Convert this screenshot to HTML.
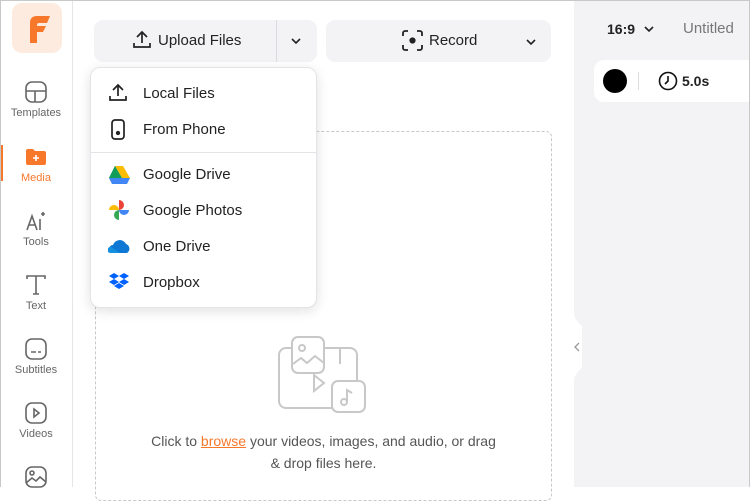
<!DOCTYPE html>
<html><head><style>
*{margin:0;padding:0;box-sizing:border-box}
body{width:750px;height:487px;overflow:hidden;font-family:"Liberation Sans",sans-serif;background:#fff;position:relative}
.frame{position:absolute;inset:0;border:1px solid #c8c8c8;border-bottom:none;pointer-events:none;z-index:20}
.side{position:absolute;left:0;top:0;width:73px;height:487px;border-right:1px solid #e6e6ea;background:#fff}
.logo{position:absolute;left:12px;top:3px;width:50px;height:50px;border-radius:10px;background:#fdebe0}
.it{position:absolute;left:0;width:72px;text-align:center;font-size:11px;color:#666}
.it svg{display:block;margin:0 auto 3px}
.main{position:absolute;left:73px;top:0;width:501px;height:487px;background:#fff}
.btn{position:absolute;top:20px;height:42px;background:#f3f3f6;border-radius:9px;font-size:15px;color:#222}
.right{position:absolute;left:574px;top:0;width:176px;height:487px;background:#f3f3f6}
.dash{position:absolute;left:95px;top:131px;width:457px;height:370px;border:1px dashed #c8c8c8;border-radius:6px}
.menu{position:absolute;left:90px;top:67px;width:227px;height:241px;background:#fff;border:1px solid #e4e4e8;border-radius:10px;box-shadow:0 3px 12px rgba(0,0,0,.12);z-index:5}
.mi{position:absolute;left:52px;font-size:15px;color:#222}
.mic{position:absolute;left:17px}
</style></head><body>
<div class="side">
 <div class="logo"><svg width="50" height="50" viewBox="0 0 50 50"><path d="M18 20q0-7 7-7h13l-3 7H27q-2 0-2 2v1h9l-3 6h-6v11h-7z" fill="#f7782b"/></svg></div>
 <div class="it" style="top:80px"><svg width="24" height="24" viewBox="0 0 24 24" fill="none" stroke="#666" stroke-width="1.6"><rect x="2" y="2" width="20" height="20" rx="6"/><path d="M2 11h20M11 11v11"/></svg>Templates</div>
 <div style="position:absolute;left:0;top:145px;width:3px;height:36px;background:#f7782b"></div>
 <div class="it" style="top:145px;color:#f7782b"><svg width="24" height="24" viewBox="0 0 24 24"><path d="M2 6a2 2 0 0 1 2-2h5l2 2h9a2 2 0 0 1 2 2v10a2 2 0 0 1-2 2H4a2 2 0 0 1-2-2z" fill="#f7782b"/><path d="M12 10v6M9 13h6" stroke="#fff" stroke-width="1.6"/></svg>Media</div>
 <div class="it" style="top:209px"><svg width="24" height="24" viewBox="0 0 24 24" fill="none" stroke="#666" stroke-width="1.6"><path d="M3 21l5-14 5 14M5 16h6M16 10v11M19 3v4M17 5h4"/></svg>Tools</div>
 <div class="it" style="top:273px"><svg width="24" height="24" viewBox="0 0 24 24" fill="none" stroke="#666" stroke-width="1.6"><path d="M3 6V3h18v3M12 3v18M9 21h6"/></svg>Text</div>
 <div class="it" style="top:337px"><svg width="24" height="24" viewBox="0 0 24 24" fill="none" stroke="#666" stroke-width="1.6"><rect x="2" y="2" width="20" height="20" rx="6"/><path d="M7 15h5M14 15h3"/></svg>Subtitles</div>
 <div class="it" style="top:401px"><svg width="24" height="24" viewBox="0 0 24 24" fill="none" stroke="#666" stroke-width="1.6"><rect x="2" y="2" width="20" height="20" rx="6"/><path d="M10 8l5 4-5 4z"/></svg>Videos</div>
 <div class="it" style="top:465px"><svg width="24" height="24" viewBox="0 0 24 24" fill="none" stroke="#666" stroke-width="1.6"><rect x="2" y="2" width="20" height="20" rx="6"/><circle cx="8" cy="8" r="2"/><path d="M2 18l6-5 4 3 4-4 6 5"/></svg></div>
</div>
<div class="main"></div>
<div class="btn" style="left:94px;width:223px">
 <svg style="position:absolute;left:38px;top:10px" width="20" height="20" viewBox="0 0 20 20" fill="none" stroke="#222" stroke-width="1.7"><path d="M10 13V2M5 7l5-5 5 5M2 13v4h16v-4"/></svg>
 <span style="position:absolute;left:64px;top:12px">Upload Files</span>
 <div style="position:absolute;left:182px;top:0;width:1px;height:42px;background:#dcdce0"></div>
 <svg style="position:absolute;left:197px;top:17px" width="10" height="8" viewBox="0 0 10 8" fill="none" stroke="#222" stroke-width="1.6"><path d="M1 2l4 4 4-4"/></svg>
</div>
<div class="btn" style="left:326px;width:225px">
 <svg style="position:absolute;left:76px;top:10px" width="21" height="21" viewBox="0 0 21 21" fill="none" stroke="#222" stroke-width="1.8"><path d="M1 6V3a2 2 0 0 1 2-2h3M15 1h3a2 2 0 0 1 2 2v3M20 15v3a2 2 0 0 1-2 2h-3M6 20H3a2 2 0 0 1-2-2v-3"/><circle cx="10.5" cy="10.5" r="2.2" fill="#222"/></svg>
 <span style="position:absolute;left:103px;top:12px">Record</span>
 <svg style="position:absolute;left:200px;top:18px" width="10" height="8" viewBox="0 0 10 8" fill="none" stroke="#222" stroke-width="1.6"><path d="M1 2l4 4 4-4"/></svg>
</div>
<div class="dash"></div>
<svg style="position:absolute;left:276px;top:334px" width="92" height="80" viewBox="0 0 92 80" fill="none" stroke="#c8c8c8" stroke-width="2"><rect x="3" y="14" width="78" height="60" rx="7"/><rect x="16" y="3" width="32" height="36" rx="6" fill="#fff"/><circle cx="26" cy="14" r="3"/><path d="M17 30l8-6 6 5 8-7 9 7M48 14v18M64 14v16"/><path d="M38 41l10 8-10 8z"/><rect x="56" y="47" width="33" height="31" rx="6" fill="#fff"/><circle cx="68" cy="68" r="3"/><path d="M71 68v-12l5 3"/></svg>
<div style="position:absolute;left:95px;top:430px;width:457px;text-align:center;font-size:14px;line-height:22px;color:#555">Click to <span style="color:#f7782b;text-decoration:underline">browse</span> your videos, images, and audio, or drag<br>&amp; drop files here.</div>
<div class="menu">
 <svg class="mic" style="top:15px" width="20" height="20" viewBox="0 0 20 20" fill="none" stroke="#222" stroke-width="1.7"><path d="M10 13V2M5 7l5-5 5 5M2 13v4h16v-4"/></svg>
 <div class="mi" style="top:17px">Local Files</div>
 <svg class="mic" style="top:51px;left:20px" width="14" height="21" viewBox="0 0 14 21" fill="none" stroke="#222" stroke-width="1.7"><rect x="1" y="1" width="12" height="19" rx="3"/><circle cx="7" cy="14" r="1.3" fill="#222"/></svg>
 <div class="mi" style="top:53px">From Phone</div>
 <div style="position:absolute;left:0;top:84px;width:225px;height:1px;background:#e4e4e8"></div>
 <svg class="mic" style="top:97px" width="22" height="20" viewBox="0 0 22 20"><path d="M7 1h8l7 12h-8z" fill="#fbbc04"/><path d="M7 1l7 12-4 6L1 13z" fill="#0f9d58"/><path d="M1 13l3 6h15l3-6z" fill="#4285f4"/><path d="M7 1l3 6-5 6H1z" fill="#0f9d58"/></svg>
 <div class="mi" style="top:98px">Google Drive</div>
 <svg class="mic" style="top:131px" width="22" height="22" viewBox="0 0 22 22"><path d="M11 11V1a5 5 0 0 1 0 10z" fill="#ea4335"/><path d="M11 11h10a5 5 0 0 1-10 0z" fill="#4285f4"/><path d="M11 11v10a5 5 0 0 1 0-10z" fill="#34a853"/><path d="M11 11H1a5 5 0 0 1 10 0z" fill="#fbbc04"/></svg>
 <div class="mi" style="top:134px">Google Photos</div>
 <svg class="mic" style="top:170px" width="24" height="16" viewBox="0 0 24 16"><path d="M5 15a4 4 0 0 1 0-8 7 7 0 0 1 13-1 5 5 0 0 1 1 9z" fill="#0f78d4"/><path d="M2 15a3 3 0 0 1 1-6l9 6z" fill="#1490df"/></svg>
 <div class="mi" style="top:170px">One Drive</div>
 <svg class="mic" style="top:204px" width="22" height="20" viewBox="0 0 22 20" fill="#0061fe"><path d="M6 1l5 3-5 3-5-3zM16 1l5 3-5 3-5-3zM1 10l5-3 5 3-5 3zM11 10l5-3 5 3-5 3zM6 14l5-3 5 3-5 3z"/></svg>
 <div class="mi" style="top:206px">Dropbox</div>
</div>
<div class="right">
 <div style="position:absolute;left:33px;top:21px;font-size:14px;font-weight:bold;color:#222">16:9</div>
 <svg style="position:absolute;left:70px;top:25px" width="10" height="8" viewBox="0 0 10 8" fill="none" stroke="#222" stroke-width="1.6"><path d="M1 2l4 4 4-4"/></svg>
 <div style="position:absolute;left:109px;top:20px;font-size:15px;color:#777">Untitled</div>
 <div style="position:absolute;left:20px;top:60px;width:170px;height:42px;background:#fff;border-radius:10px">
  <div style="position:absolute;left:9px;top:9px;width:24px;height:24px;border-radius:50%;background:#000"></div>
  <div style="position:absolute;left:44px;top:12px;width:1px;height:18px;background:#ddd"></div>
  <svg style="position:absolute;left:64px;top:11px" width="20" height="20" viewBox="0 0 20 20" fill="none" stroke="#111" stroke-width="1.6"><circle cx="10" cy="10" r="8.5"/><path d="M10 5v5l-3 3"/></svg>
  <div style="position:absolute;left:88px;top:13px;font-size:14px;font-weight:bold;color:#222">5.0s</div>
 </div>
</div>
<svg style="position:absolute;left:566px;top:312px" width="20" height="70" viewBox="0 0 20 70"><path d="M8 0q0 8 8 14v42q-8 6-8 14z" fill="#fff"/><path d="M13 31l-4 4 4 4" fill="none" stroke="#999" stroke-width="1.3"/></svg>
<div class="frame"></div>
</body></html>
